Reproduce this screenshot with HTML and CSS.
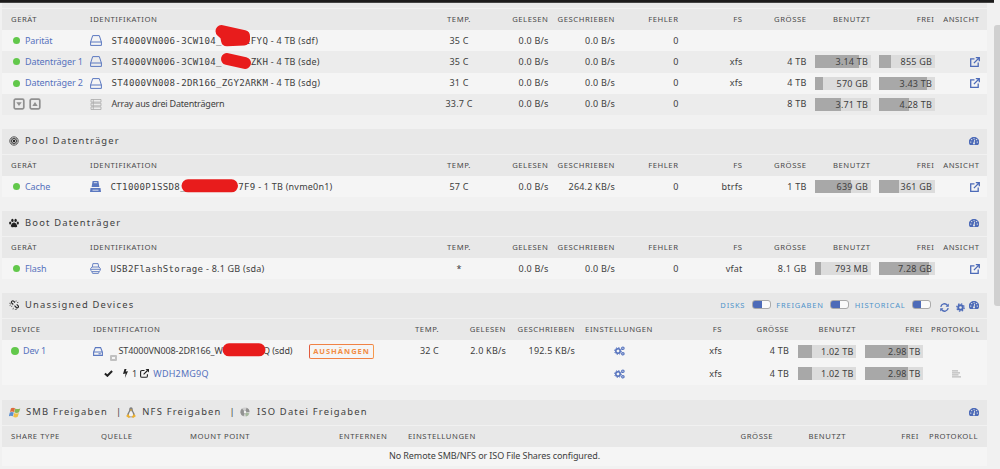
FILE: index.html
```
<!DOCTYPE html>
<html lang="de">
<head>
  <meta charset="UTF-8" />
  <meta name="viewport" content="width=device-width, initial-scale=1" />
  <title>Main</title>
  <link rel="stylesheet" href="styles.css">
</head>
<body>
  <!-- icon definitions -->
  <svg class="defs" width="0" height="0">
    <symbol id="i-disk" viewBox="0 0 12 11"><path d="M.6 7 2.7.6h6.6L11.4 7v3.4H.6zM.6 7h10.8" fill="none" stroke="currentColor" stroke-width="1"/></symbol>
    <symbol id="i-nvme" viewBox="0 0 11 11"><path d="M2.6 0h5.8l1 6H1.6zM.5 7h10l.5 4H0z" fill="currentColor"/><path d="M3.8 1.7h3.4M2.500 9.200h6" stroke="#f5f5f5" stroke-width=".8"/></symbol>
    <symbol id="i-usb" viewBox="0 0 11 11"><path d="M2.300 4 2.900.6h5.200L8.700 4M2 4h7l1.300 1.400v2L9 8.600H2L.7 7.400v-2zM1.800 8.600l.8 1.800h5.800l.8-1.800M1 6.300h9" fill="none" stroke="currentColor" stroke-width=".9"/></symbol>
    <symbol id="i-array" viewBox="0 0 11 11"><path d="M.5.5h10v2.6H.5zM.5 4.2h10v2.6H.5zM.5 7.9h10v2.6H.5zM2.8.5v10" fill="none" stroke="currentColor" stroke-width=".8"/></symbol>
    <symbol id="i-hdd" viewBox="0 0 10 9"><path d="M.6 5 2.4.6h5.2L9.4 5v3.4H.6zM.6 5h8.8M5.500 6.800h2.300" fill="none" stroke="currentColor" stroke-width="1.100"/></symbol>
    <symbol id="i-down" viewBox="0 0 12 12"><rect x="1.200" y="1.200" width="9.600" height="9.600" rx="1.300" fill="none" stroke="currentColor" stroke-width="1.700"/><path d="M3.300 4.300h5.400L6 8.100z" fill="currentColor"/></symbol>
    <symbol id="i-up" viewBox="0 0 12 12"><rect x="1.200" y="1.200" width="9.600" height="9.600" rx="1.300" fill="none" stroke="currentColor" stroke-width="1.700"/><path d="M3.300 7.900h5.400L6 4z" fill="currentColor"/></symbol>
    <symbol id="i-open" viewBox="0 0 10 10"><path d="M4.500 1.800H.7v7.500h7.500V5.500M5.800.7h3.500v3.500M9.200.8 3.900 6.100" fill="none" stroke="currentColor" stroke-width="1.300"/></symbol>
    <symbol id="i-ext" viewBox="0 0 9 9"><path d="M4.500 1.500H2q-1.400 0-1.400 1.400v4Q.6 8.300 2 8.300h4q1.400 0 1.400-1.400V5.200M3.600 5.400 7.500 1.500" fill="none" stroke="currentColor" stroke-width="1.100"/><path d="M5.500 0H9v3.500z" fill="currentColor"/></symbol>
    <symbol id="i-gauge" viewBox="0 0 10 8"><path d="M1 8A5 5 0 1 1 9 8z" fill="currentColor"/><path d="M5 6.400 5.700 2.600" stroke="#e8e8e8" stroke-width=".9"/><g fill="#e8e8e8"><circle cx="5" cy="6.400" r="1"/><circle cx="1.800" cy="5.100" r=".7"/><circle cx="2.700" cy="2.600" r=".7"/><circle cx="5" cy="1.500" r=".6"/><circle cx="7.600" cy="2.600" r=".7"/><circle cx="8.300" cy="5.100" r=".7"/></g></symbol>
    <symbol id="i-pool" viewBox="0 0 10 10"><g fill="none" stroke="currentColor"><circle cx="5" cy="5" r="4.200" stroke-width=".7"/><circle cx="5" cy="5" r="2.600" stroke-width=".8"/></g><circle cx="5" cy="5" r="1.200" fill="currentColor"/><path d="M5 .8v8.400M.8 5h8.400M2 2l6 6M8 2 2 8" stroke="currentColor" stroke-width=".3"/></symbol>
    <symbol id="i-paw" viewBox="0 0 10 9"><g fill="currentColor"><ellipse cx="3.400" cy="1.900" rx="1.200" ry="1.700"/><ellipse cx="6.600" cy="1.900" rx="1.200" ry="1.700"/><ellipse cx="1.200" cy="4.400" rx="1.100" ry="1.500"/><ellipse cx="8.800" cy="4.400" rx="1.100" ry="1.500"/><path d="M5 4c1.400 0 3.200 2.200 3.200 3.600C8.200 9.500 6.200 8.500 5 8.500s-3.200 1-3.200-.9C1.800 6.200 3.600 4 5 4z"/></g></symbol>
    <symbol id="i-unlink" viewBox="0 0 10 10"><g fill="none" stroke="currentColor" stroke-width="1.100"><path d="M4.300 4.500 2.600 2.800a1.300 1.300 0 0 1 2-1.600L6 2.500M5.500 5.700l2 2a1.300 1.300 0 0 0 1.700-1.900L7.700 4.300"/><path d="M.3 3.300h1.600M.6 5.500l1.500-.8M2.500 7l.5-1.300M7.200.4 6.900 1.800M9.400 2.300 8 2.600M4 9.500l.4-1.700M5.800 9.400h2" stroke-width=".6"/></g></symbol>
    <symbol id="i-gears" viewBox="0 0 11 10"><g fill="none" stroke="currentColor"><circle cx="4" cy="5" r="2.200" stroke-width="1.500"/><circle cx="4" cy="5" r="3.400" stroke-width="1" stroke-dasharray="1.330 1.330"/><circle cx="8.900" cy="2.200" r="1.200" stroke-width="1.200"/><circle cx="8.900" cy="7.800" r="1.200" stroke-width="1.200"/></g></symbol>
    <symbol id="i-gear" viewBox="0 0 9 9"><g fill="none" stroke="currentColor"><circle cx="4.500" cy="4.500" r="2.300" stroke-width="1.900"/><circle cx="4.500" cy="4.500" r="3.700" stroke-width="1.300" stroke-dasharray="1.450 1.450"/></g></symbol>
    <symbol id="i-refresh" viewBox="0 0 9 9"><path d="M.8 3.800a3.700 3.700 0 0 1 6.500-1.600M8.200 5.200a3.700 3.700 0 0 1-6.500 1.600" fill="none" stroke="currentColor" stroke-width="1.400"/><path d="M8.800.5v3.200H5.600zM.2 8.500V5.300h3.200z" fill="currentColor"/></symbol>
    <symbol id="i-check" viewBox="0 0 9 7"><path d="m.9 3.500 2.500 2.300L8.100 1" fill="none" stroke="currentColor" stroke-width="2"/></symbol>
    <symbol id="i-bolt" viewBox="0 0 5 9"><path d="M1.500 0h2L2.700 2.600 5 2.200 1.900 9l.7-4.600L0 5z" fill="currentColor"/></symbol>
    <symbol id="i-log" viewBox="0 0 9 8"><path d="M0 .9h6M0 2.900h8M0 4.900h6.500M0 6.900h9" stroke="currentColor" stroke-width="1.200"/></symbol>
  </svg>

  <div class="topbar"></div>
  <div class="scroll-thumb"></div>

  <main>
    <div class="strip"></div>

    <!-- Array -->
    <section>
      <div class="row head">
        <span>GERÄT</span><span>IDENTIFIKATION</span><span>TEMP.</span><span>GELESEN</span><span>GESCHRIEBEN</span><span>FEHLER</span><span>FS</span><span>GRÖSSE</span><span>BENUTZT</span><span>FREI</span><span>ANSICHT</span>
      </div>
      <div class="row array-row">
        <span class="dev"><i class="dot"></i><a>Parität</a></span>
        <span class="ident"><svg class="disk"><use href="#i-disk"/></svg><b>ST4000VN006-3CW104_&nbsp;&nbsp;&nbsp;&nbsp;IFYQ</b> - 4 TB (sdf)</span>
        <span>35 C</span><span>0.0 B/s</span><span>0.0 B/s</span><span>0</span>
      </div>
      <div class="row array-row alt">
        <span class="dev"><i class="dot"></i><a>Datenträger 1</a></span>
        <span class="ident"><svg class="disk"><use href="#i-disk"/></svg><b>ST4000VN006-3CW104_&nbsp;&nbsp;&nbsp;&nbsp;&nbsp;ZKH</b> - 4 TB (sde)</span>
        <span>35 C</span><span>0.0 B/s</span><span>0.0 B/s</span><span>0</span><span>xfs</span><span>4 TB</span>
        <span class="usage"><i style="width:79%"></i><em>3.14 TB</em></span>
        <span class="usage"><i style="width:21%"></i><em>855 GB</em></span>
        <span><svg class="open"><use href="#i-open"/></svg></span>
      </div>
      <div class="row array-row">
        <span class="dev"><i class="dot"></i><a>Datenträger 2</a></span>
        <span class="ident"><svg class="disk"><use href="#i-disk"/></svg><b>ST4000VN008-2DR166_ZGY2ARKM</b> - 4 TB (sdg)</span>
        <span>31 C</span><span>0.0 B/s</span><span>0.0 B/s</span><span>0</span><span>xfs</span><span>4 TB</span>
        <span class="usage"><i style="width:14%"></i><em>570 GB</em></span>
        <span class="usage"><i style="width:86%"></i><em>3.43 TB</em></span>
        <span><svg class="open"><use href="#i-open"/></svg></span>
      </div>
      <div class="row array-row alt">
        <span class="updown"><svg><use href="#i-down"/></svg><svg><use href="#i-up"/></svg></span>
        <span class="ident summary"><svg class="disk gray"><use href="#i-array"/></svg>Array aus drei Datenträgern</span>
        <span>33.7 C</span><span>0.0 B/s</span><span>0.0 B/s</span><span>0</span><span></span><span>8 TB</span>
        <span class="usage"><i style="width:46%"></i><em>3.71 TB</em></span>
        <span class="usage"><i style="width:54%"></i><em>4.28 TB</em></span>
      </div>
    </section>

    <!-- Pool -->
    <section>
      <div class="title"><svg class="ticon"><use href="#i-pool"/></svg><span>Pool Datenträger</span><svg class="gauge"><use href="#i-gauge"/></svg></div>
      <div class="row head">
        <span>GERÄT</span><span>IDENTIFIKATION</span><span>TEMP.</span><span>GELESEN</span><span>GESCHRIEBEN</span><span>FEHLER</span><span>FS</span><span>GRÖSSE</span><span>BENUTZT</span><span>FREI</span><span>ANSICHT</span>
      </div>
      <div class="row">
        <span class="dev"><i class="dot"></i><a>Cache</a></span>
        <span class="ident small"><svg class="disk"><use href="#i-nvme"/></svg><b>CT1000P1SSD8_&nbsp;&nbsp;&nbsp;&nbsp;&nbsp;&nbsp;&nbsp;&nbsp;&nbsp;7F9</b> - 1 TB (nvme0n1)</span>
        <span>57 C</span><span>0.0 B/s</span><span>264.2 KB/s</span><span>0</span><span>btrfs</span><span>1 TB</span>
        <span class="usage"><i style="width:64%"></i><em>639 GB</em></span>
        <span class="usage"><i style="width:36%"></i><em>361 GB</em></span>
        <span><svg class="open"><use href="#i-open"/></svg></span>
      </div>
    </section>

    <!-- Boot -->
    <section>
      <div class="title"><svg class="ticon"><use href="#i-paw"/></svg><span>Boot Datenträger</span><svg class="gauge"><use href="#i-gauge"/></svg></div>
      <div class="row head">
        <span>GERÄT</span><span>IDENTIFIKATION</span><span>TEMP.</span><span>GELESEN</span><span>GESCHRIEBEN</span><span>FEHLER</span><span>FS</span><span>GRÖSSE</span><span>BENUTZT</span><span>FREI</span><span>ANSICHT</span>
      </div>
      <div class="row">
        <span class="dev"><i class="dot"></i><a>Flash</a></span>
        <span class="ident small"><svg class="disk"><use href="#i-usb"/></svg><b>USB2FlashStorage</b> - 8.1 GB (sda)</span>
        <span>*</span><span>0.0 B/s</span><span>0.0 B/s</span><span>0</span><span>vfat</span><span>8.1 GB</span>
        <span class="usage"><i style="width:10%"></i><em>793 MB</em></span>
        <span class="usage"><i style="width:90%"></i><em>7.28 GB</em></span>
        <span><svg class="open"><use href="#i-open"/></svg></span>
      </div>
    </section>

    <!-- Unassigned Devices -->
    <section class="unassigned">
      <div class="title">
        <svg class="ticon"><use href="#i-unlink"/></svg><span>Unassigned Devices</span>
        <div class="switches">
          <label>DISKS</label><i class="switch"></i>
          <label>FREIGABEN</label><i class="switch"></i>
          <label>HISTORICAL</label><i class="switch"></i>
          <svg class="refresh"><use href="#i-refresh"/></svg>
          <svg class="gear"><use href="#i-gear"/></svg>
        </div>
        <svg class="gauge"><use href="#i-gauge"/></svg>
      </div>
      <div class="row ud head">
        <span>DEVICE</span><span>IDENTIFICATION</span><span>TEMP.</span><span>GELESEN</span><span>GESCHRIEBEN</span><span>EINSTELLUNGEN</span><span>FS</span><span>GRÖSSE</span><span>BENUTZT</span><span>FREI</span><span>PROTOKOLL</span>
      </div>
      <div class="row ud">
        <span class="dev"><i class="dot"></i><a>Dev 1</a></span>
        <span class="ident"><svg class="hdd"><use href="#i-hdd"/></svg><i class="minus"></i><span class="serial">ST4000VN008-2DR166_W</span><span class="rest">Q (sdd)</span><button>AUSHÄNGEN</button></span>
        <span>32 C</span><span>2.0 KB/s</span><span>192.5 KB/s</span>
        <span><svg class="gears"><use href="#i-gears"/></svg></span><span>xfs</span><span>4 TB</span>
        <span class="usage"><i style="width:25%"></i><em>1.02 TB</em></span>
        <span class="usage"><i style="width:75%"></i><em>2.98 TB</em></span>
      </div>
      <div class="row ud">
        <span></span>
        <span class="part"><svg class="check"><use href="#i-check"/></svg><svg class="bolt"><use href="#i-bolt"/></svg>1<svg class="ext"><use href="#i-ext"/></svg><a>WDH2MG9Q</a></span>
        <span></span><span></span><span></span>
        <span><svg class="gears"><use href="#i-gears"/></svg></span><span>xfs</span><span>4 TB</span>
        <span class="usage"><i style="width:25%"></i><em>1.02 TB</em></span>
        <span class="usage"><i style="width:75%"></i><em>2.98 TB</em></span>
        <span><svg class="log"><use href="#i-log"/></svg></span>
      </div>
    </section>

    <!-- Shares -->
    <section>
      <div class="title shares">
        <svg class="ticon" viewBox="0 0 12 11"><path d="M2 1.300q2-1.200 4 0L5 5Q3 4 1 5z" fill="#dc6b3c"/><path d="M6.300 1.500q2 1.200 5 0l-1.300 3.800q-2.400 1.200-4.700 0z" fill="#86b552"/><path d="M.8 5.500q2-1.200 4 0l-1 3.800q-2-1.200-4 0z" fill="#5b8fd0"/><path d="M5.200 5.900q2 1.200 4.700 0l-1.200 3.900q-2.200 1.200-4.500 0z" fill="#efbf48"/></svg><span>SMB Freigaben</span>
        <span class="sep">|</span>
        <svg class="tux" viewBox="0 0 10 11"><path d="M5 .3c1.500 0 1.800 1.200 1.800 2.700 0 1.400 2 2.800 2 5.200L7 10.300H3L1.200 8.200C1.200 5.800 3.200 4.400 3.200 3 3.200 1.500 3.500.3 5 .3z" fill="#808080"/><path d="M5 3.500C3.400 5 2.600 6.800 3 9.500h4C7.400 6.800 6.600 5 5 3.500z" fill="#f2f2f2"/><path d="M3.800 2.500h2.400L5 4.200zM0 9l2.300-2L4.200 10l-1.400 1zM10 9 7.700 7 5.800 10l1.400 1z" fill="#edb02f"/></svg><span>NFS Freigaben</span>
        <span class="sep">|</span>
        <svg class="disc" viewBox="0 0 11 10"><circle cx="5" cy="5" r="4.500" fill="#cfcfcf"/><path d="M5 5 2 1.600A4.500 4.500 0 0 0 3.500 9.300zM5 5l1.600-4.200A4.500 4.500 0 0 1 9.500 5z" fill="#929292"/><path d="m5 5 4.300 1.500A4.500 4.500 0 0 1 6 9.400z" fill="#a5b89d"/><circle cx="5" cy="5" r="1.200" fill="#f2f2f2"/></svg><span>ISO Datei Freigaben</span>
        <svg class="gauge"><use href="#i-gauge"/></svg>
      </div>
      <div class="row sh head">
        <span>SHARE TYPE</span><span>QUELLE</span><span>MOUNT POINT</span><span>ENTFERNEN</span><span>EINSTELLUNGEN</span><span>GRÖSSE</span><span>BENUTZT</span><span>FREI</span><span>PROTOKOLL</span>
      </div>
      <div class="empty">No Remote SMB/NFS or ISO File Shares configured.</div>
    </section>
  </main>

  <!-- marker strokes over the serial numbers -->
  <svg class="redact" viewBox="0 0 300 360">
    <g fill="#e81c1c" stroke="#e81c1c" stroke-linecap="round" stroke-linejoin="round">
      <path d="m221.500 31 22.500 5v3.500l-17 .7-1-5z" stroke-width="12"/>
      <path d="m227 59 18 4" stroke-width="12"/>
      <path d="M188 185.800h43.500M229 349.800h30" stroke-width="13"/>
    </g>
  </svg>
</body>
</html>
```
FILE: styles.css
```
* {
  box-sizing: border-box;
}

body {
  margin: 0;
  height: 469px;
  overflow: hidden;
  position: relative;
  background: #f1f1f1;
  color: #404040;
  font-family: "Noto Sans", sans-serif;
  font-size: 9px;
  line-height: 12px;
}

.defs {
  position: absolute;
}

svg {
  display: block;
  flex-shrink: 0;
}

a {
  color: #5672bd;
}

.topbar {
  width: 994px;
  height: 3px;
  background: #1c1b1b;
  border-bottom: 1px solid #444;
}

.scroll-thumb {
  position: absolute;
  right: 0;
  top: 25px;
  width: 6px;
  height: 281px;
  border-radius: 3px 0 0 3px;
  background: #d0d0d0;
}

main {
  width: 985px;
  margin-left: 2px;
}

.strip {
  height: 5px;
  margin-bottom: 1px;
  background: #e9e9e9;
}

section {
  margin-bottom: 14px;
}

.unassigned {
  margin-bottom: 15px;
}

/* Section title bar */
.title {
  display: flex;
  align-items: center;
  height: 25px;
  margin-bottom: 1px;
  padding: 0 8px 1px 7px;
  background: #e8e8e8;
  font-size: 9.4px;
  letter-spacing: 1.2px;
  white-space: pre;
}

.ticon {
  width: 10px;
  height: 10px;
  margin-right: 6px;
  color: #222;
}

.gauge {
  width: 10px;
  height: 8px;
  margin-left: auto;
  color: #4d6bb8;
}

/* Table rows */
.row {
  display: grid;
  grid-template-columns: 79px 336px 66px 56.5px 66.5px 63.5px 64px 64px 64px 64px 45px;
  align-items: center;
  height: 21px;
  padding-left: 9px;
  background: #f5f5f5;
  white-space: nowrap;
}

.row > span {
  text-align: right;
  letter-spacing: 0.2px;
}

.row > span:nth-child(-n+2) {
  text-align: left;
}

.row > span:nth-child(3) {
  text-align: center;
}

.array-row {
  height: 21.25px;
}

.alt {
  background: #ececec;
}

.row.head {
  padding-bottom: 2px;
  background: #e8e8e8;
  color: #4a4a4a;
  font-size: 7.7px;
}

.row.head > span {
  letter-spacing: 0.55px;
}

.row .dev,
.row .ident {
  display: flex;
  align-items: center;
  letter-spacing: -0.1px;
  white-space: pre;
}

.row:not(.ud) .ident {
  letter-spacing: 0.22px;
}

.row:not(.ud) .summary {
  letter-spacing: -0.2px;
}

.dot {
  width: 7px;
  height: 7px;
  margin: 0 5px 0 2px;
  border-radius: 50%;
  background: #62c84b;
}

.disk {
  width: 12px;
  height: 11px;
  margin-right: 9.500px;
  color: #5b78c0;
}

.small .disk {
  width: 11px;
}

.disk.gray {
  color: #aaa;
}

.ident b {
  font-family: "DejaVu Sans Mono", monospace;
  font-size: 9.1px;
  font-weight: normal;
  letter-spacing: 0.33px;
}

.updown {
  display: flex;
  gap: 4px;
  padding-left: 2px;
  color: #909090;
}

.updown svg {
  width: 12px;
  height: 12px;
}

.open {
  width: 10px;
  height: 10px;
  margin-left: auto;
  color: #4d6bb8;
}

/* Usage bars */
.usage {
  position: relative;
  justify-self: end;
  width: 55.5px;
  height: 13px;
  background: #dcdcdc;
}

.usage i {
  display: block;
  height: 100%;
  background: #a8a8a8;
}

.usage em {
  position: absolute;
  right: 2.500px;
  top: 0;
  font-style: normal;
  line-height: 13px;
}

/* Unassigned devices */
.row.ud {
  grid-template-columns: 82px 304px 42px 67px 69px 88px 59px 67px 67px 67px 57px;
  height: 22.5px;
}

.row.ud.head {
  height: 21px;
}

.row.ud > span:nth-child(3) {
  text-align: right;
}

.row.ud > span:nth-child(6) {
  text-align: center;
}

.row.ud .usage {
  width: 58.500px;
}

.ud .dot {
  width: 8px;
  height: 8px;
  margin: 0 4px 0 0;
}

.hdd {
  width: 10px;
  height: 9px;
  margin-right: 7px;
  color: #5b78c0;
}

.minus {
  align-self: flex-end;
  width: 7px;
  height: 6px;
  margin: 8px 1.500px -2px 0;
  border: 2px solid #c0c0c0;
  border-radius: 1px;
  background: #f5f5f5;
}

.serial {
  width: 144.500px;
}

.rest {
  width: 45.500px;
}

button {
  width: 65px;
  height: 15px;
  padding: 0 0 0 1px;
  border: 1.500px solid #ee8243;
  border-color: #f08245 #f6984b #f08245 #e25a3d;
  border-radius: 2px;
  background: none;
  color: #f28c43;
  font: bold 7.5px/11px "Noto Sans", sans-serif;
  letter-spacing: 1px;
}

.part {
  display: flex;
  align-items: center;
  padding-left: 11px;
}

.check {
  width: 9px;
  height: 7px;
  margin-right: 10px;
  color: #222;
}

.bolt {
  width: 5px;
  height: 9px;
  margin-right: 4px;
  color: #222;
}

.ext {
  width: 9px;
  height: 9px;
  margin: 0 4px 0 3px;
  color: #222;
}

.gears {
  width: 11px;
  height: 10px;
  margin: 0 auto;
  color: #5270bd;
}

.log {
  width: 9px;
  height: 8px;
  margin-left: 28.500px;
  color: #bbb;
}

.switches {
  display: flex;
  align-items: center;
  margin-left: auto;
}

.switches + .gauge {
  margin-left: 4px;
}

.switches label {
  margin-top: -1px;
  color: #4f93ca;
  font-size: 7.5px;
  letter-spacing: 0.8px;
}

.switch {
  width: 19px;
  height: 9px;
  margin: -2px 5.500px 0 6.500px;
  border: 1px solid #aaa;
  border-radius: 3px;
  background: linear-gradient(90deg, #4d6bb8 50%, #fafafa 50%);
}

.refresh,
.gear {
  width: 9px;
  height: 9px;
  margin: 4px 0 0 3.500px;
  color: #4d6bb8;
}

.gear {
  margin-left: 7px;
}

/* Remote shares */
.shares .ticon {
  width: 12px;
  height: 11px;
  margin-right: 5px;
}

.sep {
  margin: 0 4px 0 8px;
}

.tux {
  width: 10px;
  height: 11px;
  margin-right: 6px;
}

.disc {
  width: 11px;
  height: 10px;
  margin-right: 6px;
}

.row.sh {
  grid-template-columns: 90px 89px 149px 69px 100px 265px 73px 73px 59px;
}

.row.sh > span:nth-child(-n+5) {
  text-align: left;
}

.empty {
  height: 18.500px;
  background: #f5f5f5;
  line-height: 18.500px;
  text-align: center;
  letter-spacing: -0.1px;
}

.redact {
  position: absolute;
  left: 0;
  top: 0;
  width: 300px;
  height: 360px;
}
```
